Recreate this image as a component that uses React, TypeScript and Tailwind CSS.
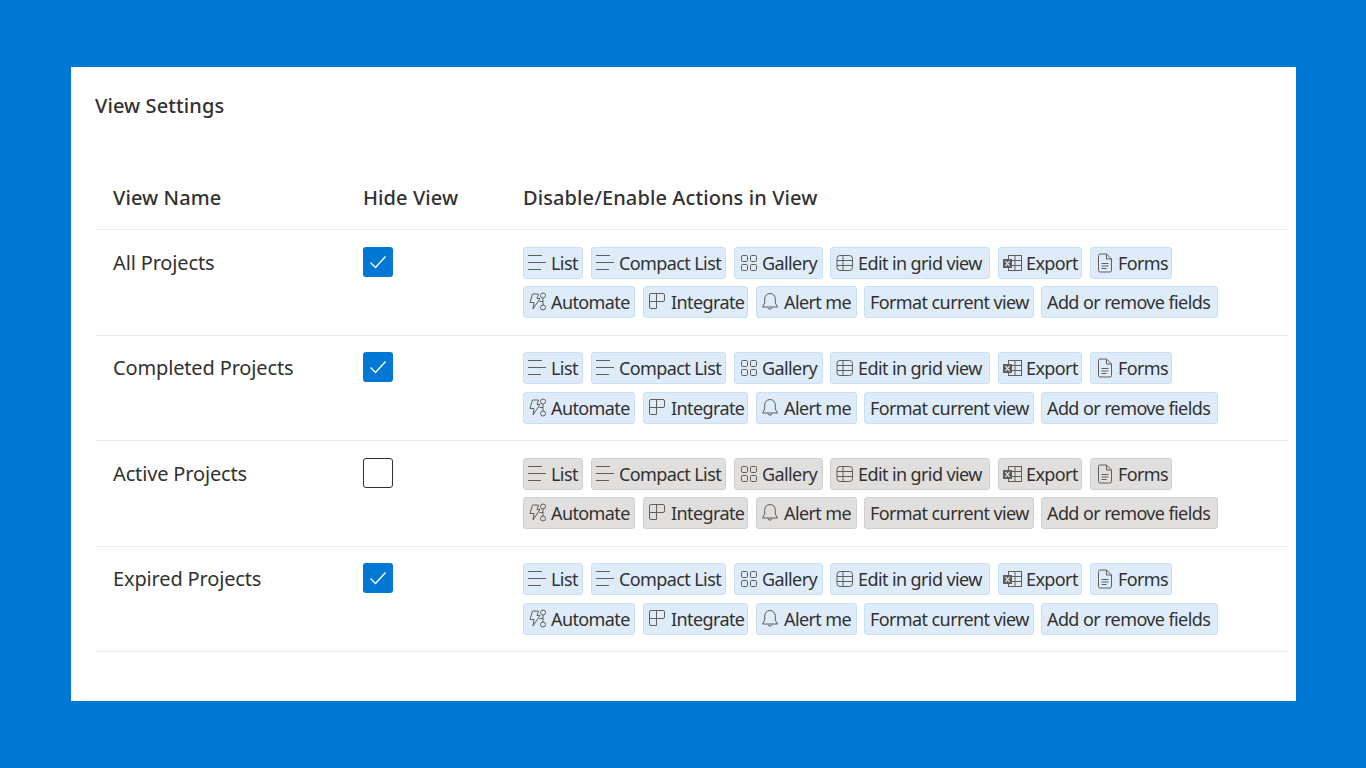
const chips = [
  { label: 'List', icon: 'list', width: 'w-[60px]' },
  { label: 'Compact List', icon: 'list', width: 'w-[135px]' },
  { label: 'Gallery', icon: 'gallery', width: 'w-[89px] -mr-px' },
  { label: 'Edit in grid view', icon: 'grid', width: 'w-[160px]' },
  { label: 'Export', icon: 'excel', width: 'w-[84px]' },
  { label: 'Forms', icon: 'forms', width: 'w-[82px]' },
  { label: 'Automate', icon: 'automate', width: 'w-[112px]' },
  { label: 'Integrate', icon: 'integrate', width: 'w-[105px]' },
  { label: 'Alert me', icon: 'bell', width: 'w-[101px] -mr-px' },
  { label: 'Format current view', icon: '', width: 'w-[170px] -mr-px' },
  { label: 'Add or remove fields', icon: '', width: 'w-[177px]' },
]

const views = [
  { name: 'All Projects', hidden: true },
  { name: 'Completed Projects', hidden: true },
  { name: 'Active Projects', hidden: false },
  { name: 'Expired Projects', hidden: true },
]

function ChipIcon({ name }: { name: string }) {
  const common = {
    width: 20,
    height: 20,
    viewBox: '0 0 20 20',
    fill: 'none',
    stroke: '#605e5c',
    strokeWidth: 1,
    className: 'shrink-0 mr-[3px]',
  }
  if (name === 'list') {
    return (
      <svg {...common}>
        <path d="M0 2.5h14M0 9.5h18M0 16.5h13" strokeWidth="1.2" />
      </svg>
    )
  }
  if (name === 'gallery') {
    return (
      <svg {...common}>
        <rect x="2.5" y="2.5" width="6" height="6" rx="1.2" />
        <rect x="11.5" y="2.5" width="6" height="6" rx="1.2" />
        <rect x="2.5" y="11.5" width="6" height="6" rx="1.2" />
        <rect x="11.5" y="11.5" width="6" height="6" rx="1.2" />
      </svg>
    )
  }
  if (name === 'grid') {
    return (
      <svg {...common}>
        <rect x="2" y="2.5" width="15.5" height="15" rx="3" />
        <path d="M2 7.5h15.5M2 12.5h15.5M8 2.5v15" />
      </svg>
    )
  }
  if (name === 'excel') {
    return (
      <svg {...common}>
        <rect x="5.5" y="2.5" width="13" height="15" />
        <path d="M12 2.5v15M5.5 7.5h13M5.5 12.5h13" />
        <rect x="0" y="6" width="9" height="9" fill="#605e5c" stroke="none" />
        <path d="M2.5 8l4 5M6.5 8l-4 5" stroke="#ffffff" strokeWidth="1.1" />
      </svg>
    )
  }
  if (name === 'forms') {
    return (
      <svg {...common}>
        <path d="M3.5 2.5a1.5 1.5 0 0 1 1.5-1.5h6.5l5 5v11.5a1.5 1.5 0 0 1-1.5 1.5H5a1.5 1.5 0 0 1-1.5-1.5z" />
        <path d="M11.5 1v5h5M6.5 10.5h7M6.5 13h7M6.5 15.5h5" />
      </svg>
    )
  }
  if (name === 'automate') {
    return (
      <svg {...common}>
        <path d="M4.5 2h6l-1.5 4.5h3L5 17l1-6.5H2z" />
        <circle cx="15" cy="3.5" r="2.5" />
        <circle cx="15" cy="15.5" r="2.5" />
        <path d="M15 6v7M11.5 9.5H15" />
      </svg>
    )
  }
  if (name === 'integrate') {
    return (
      <svg {...common}>
        <path d="M1.5 3a1.5 1.5 0 0 1 1.5-1.5h12a1.5 1.5 0 0 1 1.5 1.5v5a1.5 1.5 0 0 1-1.5 1.5H8.5v7H3a1.5 1.5 0 0 1-1.5-1.5z" />
        <path d="M8.5 1.5v8M1.5 9.5h7" />
      </svg>
    )
  }
  if (name === 'bell') {
    return (
      <svg {...common}>
        <path d="M9 1.5c-3.2 0-5.3 2.4-5.3 5.5v4L1.5 15h15l-2.2-4V7c0-3.1-2.1-5.5-5.3-5.5z" />
        <path d="M6.8 15.5a2.3 2.3 0 0 0 4.4 0" />
      </svg>
    )
  }
  return null
}

function Chip({ label, icon, width, off }: { label: string; icon: string; width: string; off: boolean }) {
  return (
    <span
      className={`${width} h-8 flex items-center rounded-[3px] border text-[18px] leading-none text-[#323130] tracking-[-0.6px] ${
        icon ? 'pl-1' : 'pl-[5px]'
      } ${off ? 'bg-[#e1dfdd] border-[#d2d0ce]' : 'bg-[#deecf9] border-[#c7e0f4]'}`}
    >
      <ChipIcon name={icon} />
      <span className="whitespace-nowrap">{label}</span>
    </span>
  )
}

function Checkbox({ checked }: { checked: boolean }) {
  if (!checked) {
    return <div className="w-[30px] h-[30px] rounded-[3px] border border-[#323130] bg-white" />
  }
  return (
    <div className="w-[30px] h-[30px] rounded-[3px] bg-[#0078d4] flex items-center justify-center">
      <svg width="18" height="14" viewBox="0 0 18 14" fill="none" stroke="#ffffff" strokeWidth="1.4">
        <path d="M1.5 7.5l5 5L16.5 1.5" />
      </svg>
    </div>
  )
}

export default function App() {
  return (
    <div className="min-h-screen bg-[#0078d4] pl-[71px] pr-[70px] pt-[67px] font-['Noto_Sans','Open_Sans',sans-serif]">
      <div className="h-[634px] bg-white pl-6 pr-2 pt-[24px]">
        <h1 className="text-[20px] leading-[30px] font-medium text-[#323130] tracking-[0.1px]">View Settings</h1>

        {/* Header row */}
        <div className="mt-[49px] grid grid-cols-[250px_160px_1fr] h-[60.4px] pb-1 items-center border-b border-[#edebe9] text-[20px] font-medium text-[#323130] tracking-[0.1px]">
          <div className="pl-[18px]">View Name</div>
          <div className="pl-[18px]">Hide View</div>
          <div className="pl-[18px]">Disable/Enable Actions in View</div>
        </div>

        {views.map((view) => (
          <div
            key={view.name}
            className="grid grid-cols-[250px_160px_1fr] h-[105.4px] border-b border-[#edebe9] pt-[16.6px] text-[20px] text-[#323130]"
          >
            <div className="pl-[18px] leading-[32px] tracking-[-0.15px]">{view.name}</div>
            <div className="pl-[18px]">
              <Checkbox checked={view.hidden} />
            </div>
            <div className="pl-[18px] flex flex-wrap gap-x-2 gap-y-[7.5px] content-start w-[740px]">
              {chips.map((chip) => (
                <Chip key={chip.label} {...chip} off={!view.hidden} />
              ))}
            </div>
          </div>
        ))}
      </div>
    </div>
  )
}
